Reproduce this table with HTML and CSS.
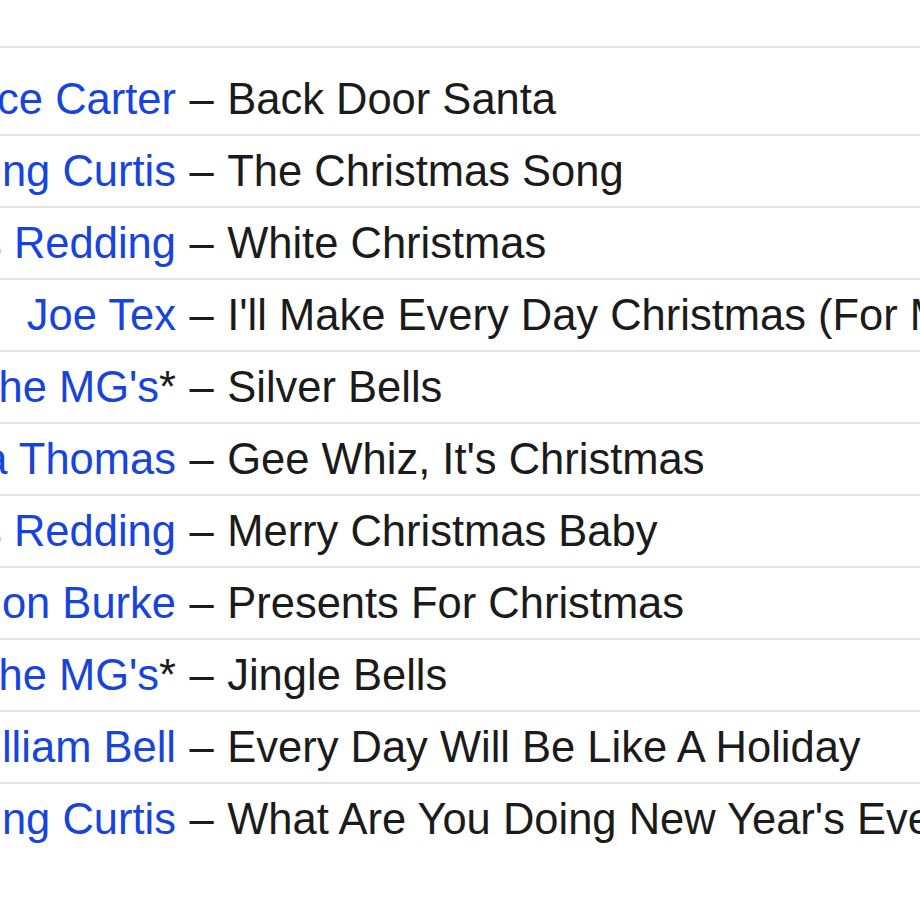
FILE: index.html
```html
<!DOCTYPE html>
<html lang="en">
<head>
<meta charset="utf-8">
<title>Tracklist</title>
<link rel="stylesheet" href="styles.css">
</head>
<body>
<div class="tracklist">
  <div class="track track-first"><span class="artist"><a href="#">Clarence Carter</a></span><span class="sep">–</span><span class="title">Back Door Santa</span></div>
  <div class="track"><span class="artist"><a href="#">King Curtis</a></span><span class="sep">–</span><span class="title">The Christmas Song</span></div>
  <div class="track"><span class="artist"><a href="#">Otis Redding</a></span><span class="sep">–</span><span class="title">White Christmas</span></div>
  <div class="track"><span class="artist"><a href="#">Joe Tex</a></span><span class="sep">–</span><span class="title">I'll Make Every Day Christmas (For My Woman)</span></div>
  <div class="track"><span class="artist"><a href="#">Booker T. &amp; The MG's</a>*</span><span class="sep">–</span><span class="title">Silver Bells</span></div>
  <div class="track"><span class="artist"><a href="#">Carla Thomas</a></span><span class="sep">–</span><span class="title">Gee Whiz, It's Christmas</span></div>
  <div class="track"><span class="artist"><a href="#">Otis Redding</a></span><span class="sep">–</span><span class="title">Merry Christmas Baby</span></div>
  <div class="track"><span class="artist"><a href="#">Solomon Burke</a></span><span class="sep">–</span><span class="title">Presents For Christmas</span></div>
  <div class="track"><span class="artist"><a href="#">Booker T. &amp; The MG's</a>*</span><span class="sep">–</span><span class="title">Jingle Bells</span></div>
  <div class="track"><span class="artist"><a href="#">William Bell</a></span><span class="sep">–</span><span class="title">Every Day Will Be Like A Holiday</span></div>
  <div class="track"><span class="artist"><a href="#">King Curtis</a></span><span class="sep">–</span><span class="title">What Are You Doing New Year's Eve</span></div>
</div>
</body>
</html>
```
FILE: styles.css
```css
html, body {
  margin: 0;
  padding: 0;
  background: #ffffff;
}
body {
  width: 920px;
  height: 920px;
  overflow: hidden;
  font-family: "Liberation Sans", Arial, Helvetica, sans-serif;
  font-size: 43.5px;
  color: #1b1b1b;
}
.tracklist {
  padding-top: 46px;
}
.track {
  display: flex;
  align-items: stretch;
  height: 70px;
  line-height: 70px;
  border-top: 2px solid #e3e3e3;
  white-space: nowrap;
}
.track-first {
  box-sizing: border-box;
  height: 88px;
  padding-top: 16px;
}
.artist {
  flex: 0 0 176px;
  width: 176px;
  display: flex;
  justify-content: flex-end;
}
.artist a {
  color: #1745dc;
  text-decoration: none;
}
.sep {
  flex: 0 0 auto;
  margin: 0 13.5px;
}
.title {
  flex: 0 0 auto;
}
```
